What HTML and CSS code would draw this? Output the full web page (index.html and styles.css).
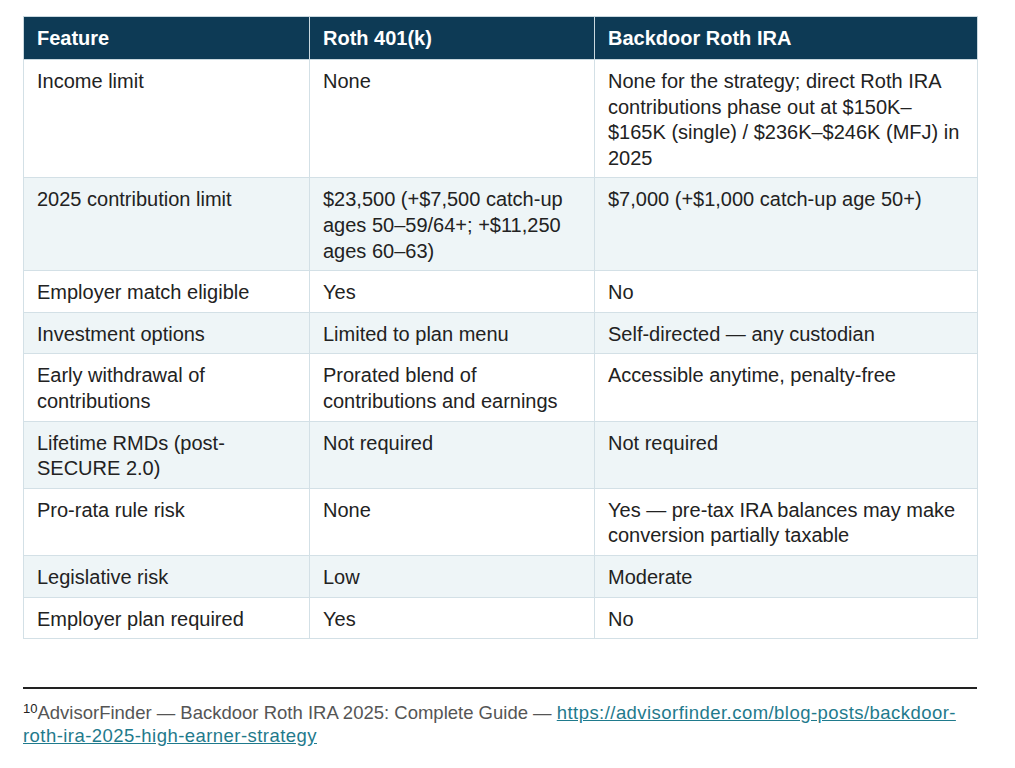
FILE: index.html
```html
<!DOCTYPE html>
<html lang="en">
<head>
<meta charset="utf-8">
<title>Roth 401(k) vs Backdoor Roth IRA</title>
<link rel="stylesheet" href="styles.css">
</head>
<body>
<main class="page">
  <table class="cmp">
    <colgroup>
      <col class="c1"><col class="c2"><col class="c3">
    </colgroup>
    <thead>
      <tr><th>Feature</th><th>Roth 401(k)</th><th>Backdoor Roth IRA</th></tr>
    </thead>
    <tbody>
      <tr><td>Income limit</td><td>None</td><td>None for the strategy; direct Roth IRA contributions phase out at $150K–$165K (single) / $236K–$246K (MFJ) in 2025</td></tr>
      <tr><td>2025 contribution limit</td><td>$23,500 (+$7,500 catch-up ages 50–59/64+; +$11,250 ages 60–63)</td><td>$7,000 (+$1,000 catch-up age 50+)</td></tr>
      <tr><td>Employer match eligible</td><td>Yes</td><td>No</td></tr>
      <tr><td>Investment options</td><td>Limited to plan menu</td><td>Self-directed — any custodian</td></tr>
      <tr><td>Early withdrawal of contributions</td><td>Prorated blend of contributions and earnings</td><td>Accessible anytime, penalty-free</td></tr>
      <tr><td>Lifetime RMDs (post-SECURE 2.0)</td><td>Not required</td><td>Not required</td></tr>
      <tr><td>Pro-rata rule risk</td><td>None</td><td>Yes — pre-tax IRA balances may make conversion partially taxable</td></tr>
      <tr><td>Legislative risk</td><td>Low</td><td>Moderate</td></tr>
      <tr><td>Employer plan required</td><td>Yes</td><td>No</td></tr>
    </tbody>
  </table>
  <footer class="notes">
    <p class="note"><sup>10</sup>AdvisorFinder — Backdoor Roth IRA 2025: Complete Guide — <a href="https://advisorfinder.com/blog-posts/backdoor-roth-ira-2025-high-earner-strategy">https://advisorfinder.com/blog-posts/backdoor-roth-ira-2025-high-earner-strategy</a></p>
  </footer>
</main>
</body>
</html>
```
FILE: styles.css
```css
html, body {
  margin: 0;
  padding: 0;
  background: #ffffff;
}
body {
  font-family: "Liberation Sans", Arial, Helvetica, sans-serif;
  color: #222222;
}
.page {
  width: 954px;
  padding: 16px 0 0 23px;
}
.cmp {
  width: 954px;
  border-collapse: collapse;
  table-layout: fixed;
  font-size: 20px;
  line-height: 25.6px;
}
.cmp .c1 { width: 286px; }
.cmp .c2 { width: 285px; }
.cmp .c3 { width: 383px; }
.cmp th {
  background: #0d3a55;
  color: #ffffff;
  font-weight: bold;
  text-align: left;
  padding: 9px 13px 7px 13px;
  border: 1px solid #c9d8df;
  height: 26px;
}
.cmp td {
  vertical-align: top;
  padding: 9px 13px 6px 13px;
  border: 1px solid #d3e0e6;
}
.cmp tbody tr:nth-child(even) td {
  background: #eef5f7;
}
.notes {
  margin-top: 48px;
  border-top: 2px solid #222222;
  padding-top: 12px;
}
.note {
  margin: 0;
  font-size: 18.5px;
  line-height: 23px;
  color: #555555;
}
.note sup {
  font-size: 13px;
  line-height: 0;
  vertical-align: 6px;
  color: #222222;
}
.note a {
  color: #1f7a8c;
  text-decoration: underline;
  letter-spacing: 0.45px;
}
```
